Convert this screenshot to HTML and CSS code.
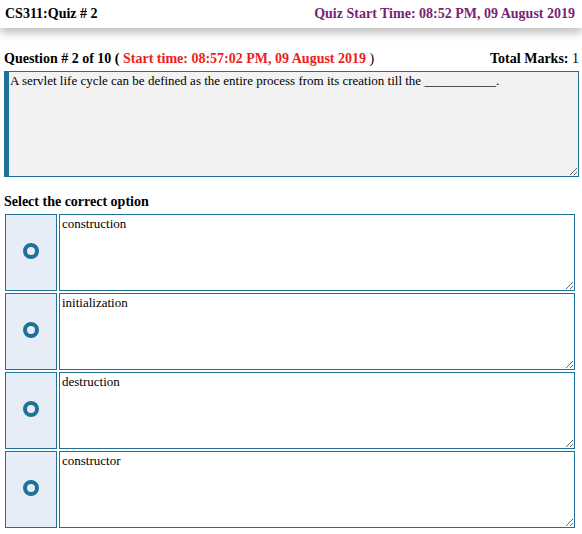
FILE: index.html
```html
<!DOCTYPE html>
<html>
<head>
    <title>CS311:Quiz # 2</title>
    <link rel="stylesheet" href="styles.css">
</head>
<body>
    <div class="topbar">
        <span class="course">CS311:Quiz # 2</span>
        <span class="quiz-time">Quiz Start Time: 08:52 PM, 09 August 2019</span>
    </div>

    <div class="content">
        <div class="question-head">
            <span>Question # 2 of 10 ( <span class="start-time">Start time: 08:57:02 PM, 09 August 2019</span> <span class="plain">)</span></span>
            <span>Total Marks: <span class="plain">1</span></span>
        </div>
        <textarea class="question-text" readonly>A servlet life cycle can be defined as the entire process from its creation till the ___________.</textarea>

        <h4 class="select-title">Select the correct option</h4>

        <div class="options">
            <div class="option">
                <label class="radio-cell"><input type="radio" name="answer"><span class="ring"></span></label>
                <textarea class="option-text" readonly>construction</textarea>
            </div>
            <div class="option">
                <label class="radio-cell"><input type="radio" name="answer"><span class="ring"></span></label>
                <textarea class="option-text" readonly>initialization</textarea>
            </div>
            <div class="option">
                <label class="radio-cell"><input type="radio" name="answer"><span class="ring"></span></label>
                <textarea class="option-text" readonly>destruction</textarea>
            </div>
            <div class="option">
                <label class="radio-cell"><input type="radio" name="answer"><span class="ring"></span></label>
                <textarea class="option-text" readonly>constructor</textarea>
            </div>
        </div>
    </div>
</body>
</html>
```

FILE: styles.css
```css
body {
    margin: 0;
    font-family: "Liberation Serif", "Times New Roman", serif;
    background: #fff;
    color: #000;
}

.topbar {
    display: flex;
    justify-content: space-between;
    align-items: center;
    height: 28px;
    padding: 0 7px 0 5px;
    font-size: 14px;
    font-weight: bold;
    box-shadow: 0 5px 9px rgba(0, 0, 0, 0.25);
}

.quiz-time {
    color: #7b1f74;
}

.content {
    padding: 0 3px 0 4px;
}

.question-head {
    display: flex;
    justify-content: space-between;
    margin-top: 22px;
    font-size: 14px;
    font-weight: bold;
    line-height: 17px;
}

.start-time {
    color: #f21b1b;
}

.plain {
    font-weight: normal;
}

.question-text {
    display: block;
    box-sizing: border-box;
    width: 100%;
    height: 106px;
    margin: 4px 0 0 0;
    padding: 1px 1px;
    border: 1px solid #1f7199;
    border-left: 5px solid #1f7199;
    background: #f2f2f2;
    font-family: inherit;
    font-size: 13px;
    line-height: 15px;
    color: #000;
    outline: none;
}

.select-title {
    margin: 16px 0 4px 0;
    font-size: 14px;
    line-height: 17px;
}

.options {
    display: flex;
    flex-direction: column;
    gap: 2px;
    margin: 0 4px 0 1px;
}

.option {
    display: flex;
    gap: 2px;
    height: 77px;
}

.radio-cell {
    display: flex;
    align-items: center;
    justify-content: center;
    box-sizing: border-box;
    width: 52px;
    flex: none;
    border: 1px solid #1f7199;
    background: #e6edf6;
    padding-bottom: 3px;
}

.radio-cell input {
    display: none;
}

.ring {
    box-sizing: border-box;
    width: 16px;
    height: 16px;
    border: 4px solid #1f7199;
    border-radius: 50%;
}

.option-text {
    flex: 1;
    min-width: 0;
    width: 0;
    box-sizing: border-box;
    height: 77px;
    margin: 0;
    padding: 1px 2px;
    border: 1px solid #1f7199;
    background: #fff;
    font-family: inherit;
    font-size: 13px;
    line-height: 15px;
    color: #000;
    outline: none;
}
```
